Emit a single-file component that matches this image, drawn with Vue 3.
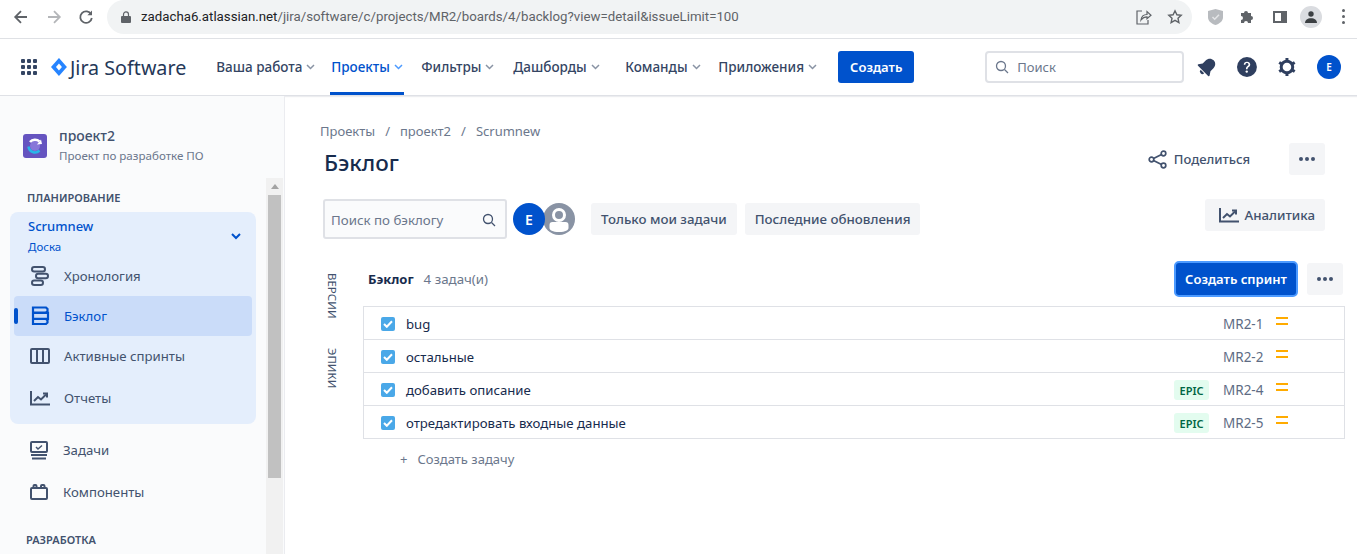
<script setup>
const navItems = [
  { label: 'Ваша работа' },
  { label: 'Проекты', active: true },
  { label: 'Фильтры' },
  { label: 'Дашборды' },
  { label: 'Команды' },
  { label: 'Приложения' },
]

const boardItems = [
  { label: 'Хронология', icon: 'timeline' },
  { label: 'Бэклог', icon: 'backlog', active: true },
  { label: 'Активные спринты', icon: 'board' },
  { label: 'Отчеты', icon: 'chart' },
]

const issues = [
  { title: 'bug', key: 'MR2-1' },
  { title: 'остальные', key: 'MR2-2' },
  { title: 'добавить описание', key: 'MR2-4', epic: true },
  { title: 'отредактировать входные данные', key: 'MR2-5', epic: true },
]
</script>

<template>
  <div class="page">
    <header class="chrome">
      <svg width="16" height="16" viewBox="0 0 16 16" fill="none" stroke="#5f6368" stroke-width="1.8"><path d="M14 8H2.500M8 2.200 2.200 8 8 13.800" /></svg>
      <svg class="c-fwd" width="16" height="16" viewBox="0 0 16 16" fill="none" stroke="#b4b6b9" stroke-width="1.8"><path d="M2 8h11.500M8 2.200 13.800 8 8 13.800" /></svg>
      <svg class="c-rel" width="16" height="16" viewBox="0 0 16 16" fill="none" stroke="#5f6368" stroke-width="1.8"><path d="M13.200 5.400A5.800 5.800 0 1 0 13.800 9" /><path d="M14 1.600v4.600H9.400" fill="#5f6368" stroke="none" /></svg>
      <div class="omnibox">
        <svg width="10" height="12" viewBox="0 0 10 12"><path d="M1 5h8a1 1 0 0 1 1 1v5a1 1 0 0 1-1 1H1a1 1 0 0 1-1-1V6a1 1 0 0 1 1-1z" fill="#5f6368" /><path d="M2.500 5V3.400a2.500 2.500 0 0 1 5 0V5" fill="none" stroke="#5f6368" stroke-width="1.2" /></svg>
        <span class="url"><b>zadacha6.atlassian.net</b>/jira/software/c/projects/MR2/boards/4/backlog?view=detail&amp;issueLimit=100</span>
        <svg class="omni-share" width="16" height="16" viewBox="0 0 16 16" fill="none" stroke="#5f6368" stroke-width="1.2"><path d="M6 2H1v13h11v-4" /><path d="M5 11c.4-3.500 3-5.500 6-5.500V2.500l4 3.700-4 3.500V7.800c-2.500 0-4.500 1.200-6 3.200z" /></svg>
        <svg width="16" height="16" viewBox="0 0 16 16" fill="none" stroke="#5f6368" stroke-width="1.4"><path d="m8 1.800 1.900 4 4.300.5-3.200 3 .9 4.300L8 11.400l-3.900 2.200.9-4.300-3.200-3 4.300-.5z" /></svg>
      </div>
      <svg class="ext-shield" width="15" height="16" viewBox="0 0 15 16"><path d="M7.500 0 15 2v6c0 4-3 6.500-7.500 8C3 14.500 0 12 0 8V2z" fill="#b8bbbf" /><path d="m4.500 8 2.200 2.200L11 5.800" fill="none" stroke="#e4e5e7" stroke-width="1.500" /></svg>
      <svg class="ext-puzzle" width="15" height="14" viewBox="0 0 15 14"><path d="M1 3h3a2 2 0 1 1 4 0h3v3a2 2 0 1 1 0 4v3H8a2 2 0 1 0-4 0H1v-3a2 2 0 1 0 0-4z" fill="#5f6368" /></svg>
      <svg class="ext-panel" width="14" height="12" viewBox="0 0 14 12"><path d="M0 0h14v12H0z" fill="#5f6368" /><path d="M2 2h6v8H2z" fill="#fff" /></svg>
      <span class="profile"><svg width="12" height="12" viewBox="0 0 12 12" fill="#3c4043"><circle cx="6" cy="3" r="2.700" /><path d="M0 12c0-3 2.500-4.800 6-4.800S12 9 12 12z" /></svg></span>
      <span class="kebab"><i></i><i></i><i></i></span>
    </header>

    <nav class="topnav">
      <span class="grid-ic"><i v-for="n in 9" :key="n"></i></span>
      <svg class="logo-mark" width="16" height="18" viewBox="0 0 16 18"><path d="M8 0 16 9 8 18 0 9z" fill="#2684ff" /><path d="M8 5.500 11 9 8 12.500 5 9z" fill="#fff" /></svg>
      <span class="logo-text">Jira Software</span>
      <div class="nav-items">
        <div v-for="item in navItems" :key="item.label" class="nav-item" :class="{ active: item.active }">
          {{ item.label }}
          <svg width="9" height="6" viewBox="0 0 9 6" fill="none" stroke="currentColor" stroke-width="1.500"><path d="m1 1 3.500 3.500L8 1" /></svg>
        </div>
      </div>
      <button class="create-btn">Создать</button>
      <div class="top-search">
        <svg width="14" height="14" viewBox="0 0 14 14" fill="none" stroke="#6b778c" stroke-width="1.300"><circle cx="6" cy="6" r="4.500" /><path d="m9.500 9.500 3.500 3.500" /></svg>
        <span>Поиск</span>
      </div>
      <svg class="top-ic" width="20" height="20" viewBox="0 0 20 20" fill="#2f3f5f"><g transform="rotate(45 10 10)"><path d="M10 .5c-3.200 0-5.500 2.500-5.500 5.800v4.200L2 14.200c-.3.600 0 1.300.8 1.300h14.400c.8 0 1.100-.7.800-1.300l-2.500-3.700V6.300C15.500 3 13.200.5 10 .5z" /><path d="M7.500 16.500a2.500 2.500 0 0 0 5 0z" /></g></svg>
      <svg class="top-ic" width="20" height="20" viewBox="0 0 20 20"><circle cx="10" cy="10" r="10" fill="#2f3f5f" /><path d="M6.800 7.800C6.800 5.800 8.200 4.600 10 4.600s3.300 1.100 3.300 3c0 2.500-2.700 2.500-2.700 4.600H9c0-3 2.600-3 2.600-4.600 0-.9-.7-1.500-1.600-1.500-1 0-1.600.7-1.600 1.700z" fill="#fff" /><circle cx="9.800" cy="14.600" r="1.200" fill="#fff" /></svg>
      <svg class="top-ic" width="20" height="20" viewBox="0 0 20 20" fill="none" stroke="#2f3f5f" stroke-width="3"><circle cx="10" cy="10" r="5.800" /><path d="M10 1v2.500M10 16.500V19M2.200 5.500l2.200 1.300M15.600 13.200l2.200 1.300M2.200 14.500l2.200-1.300M15.600 6.800l2.200-1.300" /></svg>
      <span class="me-avatar">E</span>
    </nav>

    <div class="body">
      <aside class="sidebar">
        <div class="project">
          <span class="project-logo">
            <svg width="18" height="18" viewBox="0 0 18 18" fill="none" stroke-width="2.500"><circle cx="9" cy="9" r="5" fill="#8777d9" /><path d="M2.500 9.500a6.500 6.500 0 0 0 11 4" stroke="#29b6e8" /><path d="M4 5a6.500 6.500 0 0 1 9.500-.5" stroke="#fff" /><path d="m11 7.500 5-.5-1-4.500z" fill="#fff" stroke="none" /></svg>
          </span>
          <div>
            <div class="project-name">проект2</div>
            <div class="project-type">Проект по разработке ПО</div>
          </div>
        </div>

        <div class="section-title">ПЛАНИРОВАНИЕ</div>
        <div class="board-group">
          <div class="board-head">
            <div>
              <div class="board-name">Scrumnew</div>
              <div class="board-sub">Доска</div>
            </div>
            <svg width="10" height="7" viewBox="0 0 10 7" fill="none" stroke="#0052cc" stroke-width="2"><path d="m1 1 4 4 4-4" /></svg>
          </div>
          <div v-for="item in boardItems" :key="item.label" class="side-item" :class="{ active: item.active, reports: item.icon === 'chart' }">
            <svg v-if="item.icon === 'timeline'" width="20" height="20" viewBox="0 0 20 20" fill="none" stroke="currentColor" stroke-width="2"><rect x="2" y="1" width="13" height="4.500" rx="2.200" /><rect x="6" y="7.800" width="12" height="4.500" rx="2.200" /><rect x="2" y="14.500" width="11" height="4.500" rx="2.200" /></svg>
            <svg v-else-if="item.icon === 'backlog'" width="20" height="20" viewBox="0 0 20 20" fill="none" stroke="currentColor" stroke-width="2.200"><path d="M3 1.500h13l1.500 1.500v2l-1.500 1.500H3zM3 6.800h15v6H3zM3 13h13l1.500 1.500v2L16 18H3z" /></svg>
            <svg v-else-if="item.icon === 'board'" width="20" height="18" viewBox="0 0 20 18" fill="none" stroke="currentColor" stroke-width="2"><rect x="1" y="2" width="18" height="14" rx="1" /><path d="M7 2v14M13 2v14" /></svg>
            <svg v-else width="20" height="16" viewBox="0 0 20 16" fill="none" stroke="currentColor" stroke-width="2"><path d="M1 1v13.500h19" /><path d="m4 11 4-4 3 2.500 5-5" /><path d="M13 3.500h4v4" /></svg>
            <span>{{ item.label }}</span>
          </div>
        </div>

        <div class="side-item plain tasks">
          <svg width="18" height="19" viewBox="0 0 18 19" fill="none" stroke="currentColor" stroke-width="2"><rect x="1" y="1" width="16" height="10" rx="1" /><path d="m6 6 2 2 4-3.500" stroke-width="1.500" /><path d="M1 14h16M2 17.500h14" /></svg>
          <span>Задачи</span>
        </div>
        <div class="side-item plain comps">
          <svg width="18" height="16" viewBox="0 0 18 16" fill="none" stroke="currentColor" stroke-width="2"><rect x="1" y="4" width="16" height="11" rx="1" /><path d="M3.500 4V2a1 1 0 0 1 1-1h1a1 1 0 0 1 1 1v2M11 4V2a1 1 0 0 1 1-1h1.500a1 1 0 0 1 1 1v2" /></svg>
          <span>Компоненты</span>
        </div>
        <div class="section-title dev">РАЗРАБОТКА</div>

        <div class="scrollbar">
          <svg width="8" height="5" viewBox="0 0 8 5"><path d="M4 0 8 5H0z" fill="#a3a3a3" /></svg>
          <div class="thumb"></div>
        </div>
      </aside>

      <main class="main">
        <div class="crumbs">
          <span>Проекты</span><i>/</i><span>проект2</span><i>/</i><span>Scrumnew</span>
        </div>
        <div class="title-row">
          <h1>Бэклог</h1>
          <div class="share">
            <svg width="19" height="19" viewBox="0 0 19 19" fill="none" stroke="#42526e" stroke-width="1.700"><circle cx="15.500" cy="3.500" r="2.300" /><circle cx="3.500" cy="9.500" r="2.300" /><circle cx="15.500" cy="15.500" r="2.300" /><path d="m5.500 8.500 8-4M5.500 10.500l8 4" /></svg>
            <span>Поделиться</span>
          </div>
          <button class="dots-btn"><i></i><i></i><i></i></button>
        </div>

        <div class="filters">
          <div class="backlog-search">
            <span>Поиск по бэклогу</span>
            <svg width="14" height="14" viewBox="0 0 14 14" fill="none" stroke="#42526e" stroke-width="1.300"><circle cx="6" cy="6" r="4.500" /><path d="m9.500 9.500 3.500 3.500" /></svg>
          </div>
          <div class="avatars">
            <span class="av-e">E</span>
            <span class="av-g">
              <svg width="32" height="32" viewBox="0 0 32 32"><circle cx="16" cy="16" r="16" fill="#8993a4" /><circle cx="16" cy="12" r="5.500" fill="none" stroke="#fff" stroke-width="3" /><path d="M6.500 22a3 3 0 0 1 3-3h13a3 3 0 0 1 3 3v3c0 2-3 4-9.500 4s-9.500-2-9.500-4z" fill="#fff" /></svg>
            </span>
          </div>
          <button class="flat-btn mine">Только мои задачи</button>
          <button class="flat-btn">Последние обновления</button>
          <button class="flat-btn insight">
            <svg width="20" height="16" viewBox="0 0 20 16" fill="none" stroke="#42526e" stroke-width="2"><path d="M1 1v13.500h19" /><path d="m4 11 4-4 3 2.500 5-5" /><path d="M13 3.500h4v4" /></svg>
            Аналитика
          </button>
        </div>

        <div class="backlog">
          <div class="side-tabs">
            <span>ВЕРСИИ</span>
            <span>ЭПИКИ</span>
          </div>
          <div class="backlog-list">
            <div class="list-head">
              <strong>Бэклог</strong>
              <span class="count">4 задач(и)</span>
              <button class="sprint-btn">Создать спринт</button>
              <button class="dots-btn"><i></i><i></i><i></i></button>
            </div>
            <div class="issues">
              <div v-for="issue in issues" :key="issue.key" class="issue">
                <span class="check">
                  <svg width="10" height="8" viewBox="0 0 10 8" fill="none" stroke="#fff" stroke-width="2"><path d="m1 4 2.800 2.800L9 1.200" /></svg>
                </span>
                <span class="issue-title">{{ issue.title }}</span>
                <span v-if="issue.epic" class="epic">EPIC</span>
                <span class="issue-key">{{ issue.key }}</span>
                <span class="prio"><i></i><i></i></span>
              </div>
            </div>
            <div class="add-issue"><span>+</span>Создать задачу</div>
          </div>
        </div>
      </main>
    </div>
  </div>
</template>

<style>
html, body {
  margin: 0;
  background: #fff;
}
</style>

<style scoped>
.page {
  width: 1357px;
  height: 554px;
  overflow: hidden;
  font-family: "Noto Sans", "Open Sans", sans-serif;
  color: #42526e;
  background: #fff;
}
button {
  font-family: inherit;
  border: 0;
  cursor: pointer;
}

/* browser bar */
.chrome {
  height: 39px;
  box-sizing: border-box;
  padding: 0 0 5px 13px;
  display: flex;
  align-items: center;
  border-bottom: 1px solid #dfe1e5;
}
.chrome > svg { flex: none; }
.c-fwd { margin-left: 17px; }
.c-rel { margin-left: 16px; }
.omnibox {
  width: 1085px;
  height: 34px;
  margin-left: 13px;
  padding: 0 9px 0 14px;
  box-sizing: border-box;
  background: #f1f3f4;
  border-radius: 17px;
  display: flex;
  align-items: center;
  color: #5f6368;
  font-family: "Roboto", sans-serif;
  font-size: 13.25px;
  flex: none;
}
.url {
  margin-left: 10px;
  flex: 1;
  white-space: nowrap;
}
.url b {
  font-weight: 400;
  color: #202124;
}
.omni-share { margin-right: 15px; }
.ext-shield { margin-left: 16px; }
.ext-puzzle { margin-left: 17px; }
.ext-panel { margin-left: 18px; }
.profile {
  width: 22px;
  height: 22px;
  margin-left: 13px;
  border-radius: 50%;
  background: #dadce0;
  display: flex;
  align-items: center;
  justify-content: center;
}
.kebab {
  margin-left: 20px;
  display: flex;
  flex-direction: column;
  gap: 3px;
}
.kebab i {
  width: 3px;
  height: 3px;
  border-radius: 50%;
  background: #5f6368;
}

/* jira nav */
.topnav {
  height: 57px;
  box-sizing: border-box;
  padding: 0 16px 0 21px;
  display: flex;
  align-items: center;
  border-bottom: 1px solid #dfe1e6;
  box-shadow: 0 1px 1px rgba(9, 30, 66, 0.08);
  position: relative;
}
.grid-ic {
  width: 16px;
  display: grid;
  grid-template-columns: repeat(3, 4px);
  gap: 2px;
}
.grid-ic i {
  width: 4px;
  height: 4px;
  background: #344563;
  border-radius: 1px;
}
.logo-mark { margin-left: 14px; }
.logo-text {
  margin-left: 3px;
  font-size: 19.7px;
  color: #253858;
  width: 146px;
  white-space: nowrap;
}
.nav-items {
  display: grid;
  grid-template-columns: 115px 90px 92px 112px 93px 121px;
  height: 56px;
}
.nav-item {
  justify-self: start;
  height: 56px;
  padding: 0 1px;
  display: flex;
  align-items: center;
  gap: 4px;
  font-size: 13.5px;
  font-weight: 500;
  color: #344563;
  box-sizing: border-box;
  white-space: nowrap;
}
.nav-item svg { color: #8993a4; }
.nav-item.active {
  color: #0052cc;
  border-bottom: 3px solid #0052cc;
  padding-top: 3px;
}
.nav-item.active svg { color: #4c9aff; }
.create-btn {
  width: 76px;
  height: 32px;
  background: #0052cc;
  color: #fff;
  border-radius: 3px;
  font-size: 13px;
  font-weight: 600;
  flex: none;
}
.top-search {
  width: 200px;
  height: 32px;
  margin-left: 71px;
  padding-left: 8px;
  box-sizing: border-box;
  border: 2px solid #dfe1e6;
  border-radius: 4px;
  display: flex;
  align-items: center;
  gap: 8px;
  font-size: 13px;
  color: #6b778c;
}
.top-ic { margin-left: 20px; }
.top-search + .top-ic { margin-left: 13px; }
.me-avatar {
  width: 24px;
  height: 24px;
  margin-left: 20px;
  border-radius: 50%;
  background: #0052cc;
  color: #fff;
  font-size: 10px;
  font-weight: 600;
  display: flex;
  align-items: center;
  justify-content: center;
}

/* body */
.body {
  display: flex;
  height: 458px;
}
.sidebar {
  width: 284px;
  flex: none;
  position: relative;
  background: #fafbfc;
  border-right: 1px solid #ebecf0;
  overflow: hidden;
}
.project {
  display: flex;
  align-items: center;
  gap: 12px;
  padding: 30px 0 0 23px;
}
.project-logo {
  width: 24px;
  height: 24px;
  background: #6554c0;
  border-radius: 3px;
  display: flex;
  align-items: center;
  justify-content: center;
}
.project-name {
  font-size: 14px;
  font-weight: 500;
  line-height: 20px;
  color: #42526e;
}
.project-type {
  font-size: 11.6px;
  line-height: 20px;
  color: #6b778c;
}
.section-title {
  margin: 24px 0 0 27px;
  font-size: 11px;
  font-weight: 600;
  line-height: 16px;
  color: #42526e;
}
.section-title.dev {
  margin: 20px 0 0 26px;
}
.board-group {
  width: 246px;
  height: 212px;
  margin: 6px 0 0 10px;
  background: #e4eefc;
  border-radius: 8px;
  padding: 0 4px;
  box-sizing: border-box;
}
.board-head {
  height: 44px;
  padding: 4px 11px 0 14px;
  box-sizing: border-box;
  display: flex;
  align-items: center;
  justify-content: space-between;
  color: #0052cc;
}
.board-name {
  font-size: 13px;
  font-weight: 500;
  line-height: 20px;
}
.board-sub {
  font-size: 11.5px;
  line-height: 20px;
  margin-top: 1px;
}
.side-item {
  height: 40px;
  padding-left: 16px;
  display: flex;
  align-items: center;
  gap: 14px;
  font-size: 13.2px;
  color: #42526e;
  border-radius: 4px;
  position: relative;
}
.side-item.reports { margin-top: 2px; }
.side-item.active {
  background: #cadcf9;
  color: #0052cc;
}
.side-item.active::before {
  content: "";
  position: absolute;
  left: 0;
  top: 12px;
  width: 4px;
  height: 16px;
  background: #0052cc;
  border-radius: 2px;
}
.side-item.plain {
  margin-left: 14px;
  gap: 15px;
}
.side-item.tasks { margin-top: 6px; }
.side-item.comps { margin-top: 2px; }
.scrollbar {
  position: absolute;
  right: 1px;
  top: 82px;
  bottom: 0;
  width: 17px;
  background: #f1f1f1;
  display: flex;
  flex-direction: column;
  align-items: center;
  padding-top: 6px;
  box-sizing: border-box;
}
.thumb {
  width: 13px;
  height: 283px;
  margin-top: 6px;
  background: #c1c1c1;
}

/* main */
.main {
  flex: 1;
  padding: 25px 12px 0 35px;
  min-width: 0;
}
.crumbs {
  font-size: 13px;
  line-height: 20px;
  color: #6b778c;
  display: flex;
}
.crumbs i {
  font-style: normal;
  margin: 0 10px;
}
.title-row {
  display: flex;
  align-items: flex-start;
  margin-top: 2px;
  height: 32px;
  padding-right: 20px;
}
.title-row h1 {
  margin: 4px 0 0 4px;
  flex: 1;
  font-size: 22.5px;
  line-height: 32px;
  font-weight: 500;
  color: #172b4d;
}
.share {
  height: 32px;
  display: flex;
  align-items: center;
  gap: 7px;
  font-size: 13px;
  font-weight: 500;
  color: #42526e;
}
.dots-btn {
  width: 36px;
  height: 32px;
  margin-left: 39px;
  background: #f4f5f7;
  border-radius: 3px;
  display: flex;
  align-items: center;
  justify-content: center;
  gap: 2px;
  flex: none;
  padding: 0;
}
.dots-btn i {
  width: 4px;
  height: 4px;
  border-radius: 50%;
  background: #42526e;
}
.filters {
  display: flex;
  align-items: flex-start;
  margin-top: 24px;
  padding-left: 3px;
}
.backlog-search {
  width: 184px;
  height: 40px;
  box-sizing: border-box;
  border: 2px solid #dfe1e6;
  border-radius: 3px;
  background: #fafbfc;
  padding: 1px 9px 0 6px;
  display: flex;
  align-items: center;
  justify-content: space-between;
  font-size: 13.3px;
  color: #6b778c;
}
.avatars {
  display: flex;
  margin: 4px 0 0 6px;
}
.av-e {
  width: 32px;
  height: 32px;
  border-radius: 50%;
  background: #0052cc;
  color: #fff;
  font-size: 14px;
  font-weight: 600;
  display: flex;
  align-items: center;
  justify-content: center;
  position: relative;
  z-index: 1;
}
.av-g {
  width: 32px;
  height: 32px;
  margin-left: -2px;
  display: block;
}
.flat-btn {
  height: 32px;
  margin: 4px 0 0 8px;
  padding: 0 10px;
  background: #f4f5f7;
  border-radius: 3px;
  font-size: 13.3px;
  font-weight: 500;
  color: #42526e;
}
.flat-btn.mine { margin-left: 16px; }
.flat-btn.insight {
  margin: 0 20px 0 auto;
  display: flex;
  align-items: center;
  gap: 6px;
  padding: 0 10px 0 14px;
}
.backlog {
  display: flex;
  margin-top: 18px;
}
.side-tabs {
  width: 43px;
  flex: none;
  display: flex;
  flex-direction: column;
  align-items: flex-start;
  gap: 29px;
  padding: 16px 0 0 4px;
  box-sizing: border-box;
  font-size: 11.5px;
  color: #42526e;
}
.side-tabs span {
  writing-mode: vertical-rl;
  line-height: 16px;
}
.backlog-list { flex: 1; min-width: 0; }
.list-head {
  height: 44px;
  display: flex;
  align-items: center;
  padding: 0 2px 0 5px;
}
.list-head strong {
  font-size: 13px;
  font-weight: 700;
  color: #172b4d;
}
.count {
  flex: 1;
  margin-left: 10px;
  font-size: 13.3px;
  color: #6b778c;
}
.sprint-btn {
  width: 124px;
  height: 36px;
  background: #0052cc;
  color: #fff;
  border: 2px solid #4c9aff;
  border-radius: 5px;
  font-size: 13px;
  font-weight: 600;
  padding: 0;
  flex: none;
}
.list-head .dots-btn { margin-left: 9px; }
.issues {
  margin-top: 5px;
  border: 1px solid #dfe1e6;
}
.issue {
  height: 30px;
  padding-top: 2px;
  display: flex;
  align-items: center;
  padding-left: 17px;
  border-top: 1px solid #dfe1e6;
  font-size: 13.2px;
  color: #172b4d;
}
.issue:first-child { border-top: 0; }
.check {
  width: 14px;
  height: 14px;
  background: #4aa8e8;
  border-radius: 2px;
  display: flex;
  align-items: center;
  justify-content: center;
}
.issue-title {
  flex: 1;
  margin-left: 11px;
}
.epic {
  width: 35px;
  height: 20px;
  background: #e3fcef;
  color: #006644;
  border-radius: 3px;
  font-size: 11px;
  font-weight: 600;
  display: flex;
  align-items: center;
  justify-content: center;
}
.issue-key {
  width: 43px;
  margin-left: 14px;
  font-size: 13.5px;
  color: #5e6c84;
}
.prio {
  width: 12px;
  margin: -6px 56px 0 10px;
  display: flex;
  flex-direction: column;
  gap: 4px;
}
.prio i {
  height: 2px;
  background: #ffab00;
}
.add-issue {
  margin: 10px 0 0 37px;
  font-size: 13px;
  line-height: 20px;
  color: #6b778c;
}
.add-issue span { margin-right: 10px; }
</style>
